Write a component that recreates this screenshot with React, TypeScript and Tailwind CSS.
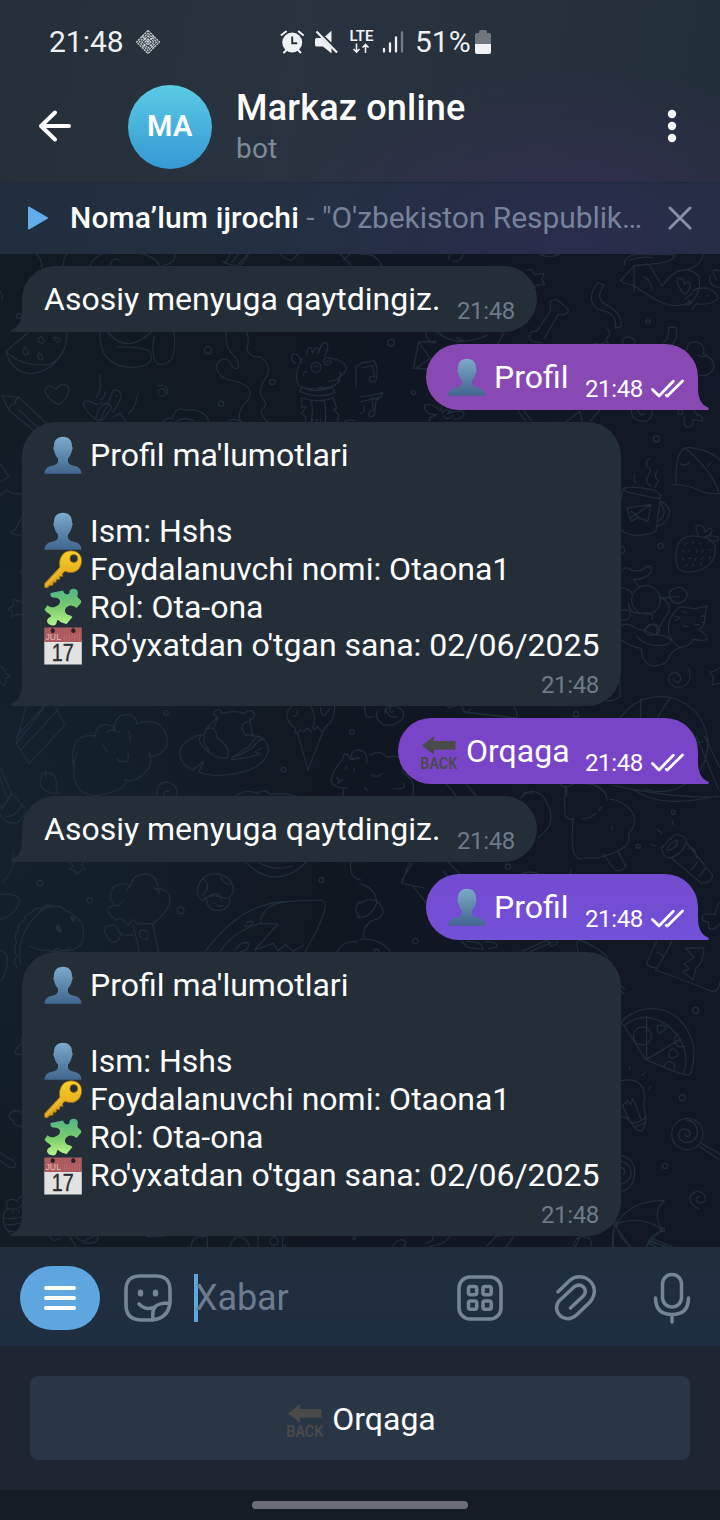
import React from 'react';

type TextLine = { icon?: 'person' | 'key' | 'puzzle' | 'calendar' | 'back'; text: string };

function Person() {
  return (
    <svg className="h-[38px] w-[38px] shrink-0" viewBox="0 0 38 38">
      <defs>
        <linearGradient id="person" x1="0" y1="0" x2="0" y2="1">
          <stop offset="0" stopColor="#7ea9c9" />
          <stop offset="1" stopColor="#41658f" />
        </linearGradient>
      </defs>
      <path
        fill="url(#person)"
        d="M19 .7C25 .7 28.300 4.500 28 10.500 29 11 28.800 13 27.800 15 27 18.500 26 20.500 24 22.500V25.500C24.500 28.500 27.500 29 31 30 35.500 31 37.300 34 37.500 37.800H.5C.7 34 2.500 31 7 30 10.500 29 13.500 28.500 14 25.500V22.500C12 20.500 11 18.500 10.200 15 9.200 13 9 11 10 10.500 9.700 4.500 13 .7 19 .7z"
      />
    </svg>
  );
}

function KeyIcon() {
  return (
    <svg className="h-[38px] w-[38px] shrink-0" viewBox="0 0 38 38">
      <defs>
        <linearGradient id="key" x1="0" y1="0" x2="0" y2="1">
          <stop offset="0" stopColor="#f9cf2b" />
          <stop offset="1" stopColor="#d99a16" />
        </linearGradient>
      </defs>
      <path
        fill="url(#key)"
        stroke="#9a6a12"
        strokeWidth=".8"
        fillRule="evenodd"
        d="M18 5.500C21 1 27 0 31.500 1.500c4.500 1.800 6.800 6 6 11.200-1 6.300-5.500 10-11 9.800-2.200-.1-4-.4-5.500-1.200l-2.500 2.500.3 2.700-2.800-.2-.5 3.300-3-.2-.5 3-2.600-.3-.6 3.200-3.200.2L3.500 38 .7 37.600.5 33.500l15.300-16.300C15 13 15.700 8.500 18 5.500zM29.800 4.600a3.900 3.900 0 1 0 0 7.800 3.900 3.900 0 0 0 0-7.800z"
      />
      <path d="M1.500 36L17.500 19.500" stroke="#f4da72" strokeWidth="1" opacity=".7" />
    </svg>
  );
}

function Puzzle() {
  return (
    <svg className="h-[38px] w-[38px] shrink-0" viewBox="0 0 38 38">
      <defs>
        <linearGradient id="puzzle" x1="0" y1="0" x2="0" y2="1">
          <stop offset="0" stopColor="#4fb487" />
          <stop offset=".5" stopColor="#7bcb6d" />
          <stop offset="1" stopColor="#b6f58a" />
        </linearGradient>
      </defs>
      <path
        fill="url(#puzzle)"
        d="M6.500 5L19 2.500Q20 6 23 6.500 26 6 25.500 3 27 .3 30.500.8 34.300 1.800 33.800 5.500 32.500 9 35 10.500 37.500 12 37.300 14.500L32.500 20Q30 17 26 17.500 20.500 19 21 23.500 22 27 26.500 27.500L28.500 29 22.500 36Q17 35 14.500 32.300 13 31.500 12.800 34 12 37.500 9 37.500 4 37 3 33.500 3 30 7 28.500 7.500 27 4 25 1.500 23.500.5 21.500L3.500 17.300Q6 20 10.500 19 16.500 17 16 12.500 14.500 9 8.500 9.500 6 8.500 6.500 5z"
      />
    </svg>
  );
}

function CalendarIcon() {
  return (
    <svg className="h-[38px] w-[38px] shrink-0 overflow-visible" viewBox="0 0 38 38">
      <path fill="#e2e2e2" d="M.3 14.500h37.500v24H.3z" />
      <path fill="#ae5a5e" d="M.3 1.500h37.500v14.500H.3z" />
      <path d="M8.500 5V1.500M29.300 5V1.500" stroke="#3a3037" strokeWidth="1.200" />
      <circle cx="8.700" cy="4.800" r="2.200" fill="#2b2229" />
      <circle cx="29.300" cy="4.800" r="2.200" fill="#2b2229" />
      <text x="1.500" y="14" fontFamily="Liberation Sans" fontSize="8.500" fill="#e0c2c3" textLength="15.500" lengthAdjust="spacingAndGlyphs">JUL</text>
      <path d="M20.500 9.500v5M23 8.500v6M25.500 9.500v5M28 8.500v6M30.500 9.500v5M33 8.500v6M35.500 7.500v7" stroke="#bb7a7d" strokeWidth="1" strokeDasharray="1 1" />
      <text x="7.800" y="34.800" fontFamily="Liberation Sans" fontSize="23" fill="#2e2e2e" stroke="#2e2e2e" strokeWidth=".4" textLength="22" lengthAdjust="spacingAndGlyphs">17</text>
    </svg>
  );
}

function BackIcon() {
  return (
    <svg className="h-[38px] w-[38px] shrink-0 overflow-visible" viewBox="0 0 38 38">
      <path fill="#4a4a4a" d="M2 13.500L14 4v5h21.500v8.700H14v5z" />
      <text x=".3" y="36.500" fontFamily="Roboto, Liberation Sans" fontWeight="600" fontSize="16" fill="#4a4a4a" textLength="37" lengthAdjust="spacingAndGlyphs">BACK</text>
    </svg>
  );
}

function LineIcon({ icon }: { icon: NonNullable<TextLine['icon']> }) {
  if (icon === 'person') return <Person />;
  if (icon === 'key') return <KeyIcon />;
  if (icon === 'puzzle') return <Puzzle />;
  if (icon === 'calendar') return <CalendarIcon />;
  return <BackIcon />;
}

function LineRow({ line }: { line: TextLine }) {
  return (
    <div className="flex h-[38px] items-center gap-2 whitespace-pre text-[32px] leading-[38px]">
      {line.icon && <LineIcon icon={line.icon} />}
      <span>{line.text}</span>
    </div>
  );
}

const profileLines: TextLine[] = [
  { icon: 'person', text: "Profil ma'lumotlari" },
  { text: ' ' },
  { icon: 'person', text: 'Ism: Hshs' },
  { icon: 'key', text: 'Foydalanuvchi nomi: Otaona1' },
  { icon: 'puzzle', text: 'Rol: Ota-ona' },
  { icon: 'calendar', text: "Ro'yxatdan o'tgan sana: 02/06/2025" },
];

function LeftTail() {
  return (
    <svg className="absolute bottom-0 -left-[11px] h-[22px] w-[12px]" viewBox="0 0 12 22">
      <path fill="#232e39" d="M12 0H11C11 10 8 16.500 1 19.600Q-.5 20.700 1 22H12z" />
    </svg>
  );
}

function IncomingShort() {
  return (
    <div className="relative ml-[22px] flex h-[66px] w-[515px] justify-between rounded-[33px] rounded-bl-none bg-[#232e39] px-[22px] pt-[14px] pb-[7px]">
      <LeftTail />
      <LineRow line={{ text: 'Asosiy menyuga qaytdingiz.' }} />
      <span className="self-end text-[24px] leading-[28px] tracking-[-.35px] text-[#6d7b89]">21:48</span>
    </div>
  );
}

function IncomingProfile() {
  return (
    <div className="relative ml-[22px] flex h-[284px] w-[599px] flex-col rounded-[34px] rounded-bl-none bg-[#232e39] px-[22px] pt-[14px]">
      <LeftTail />
      {profileLines.map((line, i) => (
        <LineRow key={i} line={line} />
      ))}
      <span className="mt-[7px] self-end text-[24px] leading-[28px] tracking-[-.35px] text-[#6d7b89]">21:48</span>
    </div>
  );
}

function Outgoing({ line, className, tail }: { line: TextLine; className: string; tail: string }) {
  return (
    <div className={`relative mr-[22px] flex h-[66px] justify-between self-end rounded-[33px] rounded-br-none pt-[14px] pr-[14px] pb-[7px] pl-[22px] ${className}`}>
      <svg className="absolute -right-[11px] bottom-0 h-[22px] w-[12px]" viewBox="0 0 12 22">
        <path fill={tail} d="M0 0H1C1 10 4 16.500 11 19.600Q12.500 20.700 11 22H0z" />
      </svg>
      <LineRow line={line} />
      <div className="flex items-center gap-2 self-end">
        <span className="text-[24px] leading-[28px] tracking-[-.35px]">21:48</span>
        <svg className="h-[20px] w-[33px]" viewBox="0 0 33 20" fill="none" stroke="#fff" strokeWidth="2.800" strokeLinecap="round" strokeLinejoin="round">
          <path d="M1.500 10.500L8 17L22.300 2.300M15.300 16.300L16.300 17L31.500 2" />
        </svg>
      </div>
    </div>
  );
}

function Wallpaper() {
  return (
    <svg className="absolute inset-0 h-full w-full" viewBox="0 254 720 993" fill="none" stroke="#202d3a" strokeWidth="3.800" strokeLinecap="round" strokeLinejoin="round">
      {/* melon, sloth, snake, llama, pencil */}
      <g transform="translate(0 250) scale(.33333)">
        <path d="M108 12q18 16 17 38M190 46q0-26 12-34M270 46q20-40 70-40M330 46q12-30 30-14M480 46q-28-44-110-36M490 46q40-6 34-34M668 34q20 12 42 12t34-30M690 12l-14 28M715 12l-20 26M745 12l-30 30M840 14q30 22 40 14l14-16M1020 12l32 32M1050 12l-20 20" />
        <path d="M18 304L82 250M200 246q4 70-52 98Q60 350 18 304q14 60 72 67 70-4 100-70M122 259q16 14 6 20-14 0-14-12zM160 262q22 0 22 10-14 10-22-10zM74 290q18 18 8 24-14 2-14-10zM118 308q16 16 8 22-16 0-12-14z" />
        <path d="M300 246q-4 100 90 106 80-2 60-46-10-14-98-16M322 246q60 70 132 0M462 260q-10 70 12 82 60 10 48-96" />
        <circle cx="624" cy="301" r="11" /><circle cx="663" cy="461" r="8" /><circle cx="817" cy="396" r="8" /><circle cx="57" cy="198" r="7" />
        <path d="M678 246q-2 40 14 60 30 30 22 48-14 8-26-20-20-18-38 10-2 36 40 46 80 16 54 60-40 40-20 66M740 246q10 30 0 50 10 30 40 24 36 24 20 60-30 40-12 66 20 16-4 34 0 20 20 36" />
        <path d="M888 340q-14-4-14-22 8-14 22 0l10 20M906 324q-20 40-16 62 0 18 14 26 50 10 90-2 30-12 24-30 22-10 20-30-6-18-48-26M920 316q2-30 14-22l4 16q8-26 20-10M955 310q12-40 24-30 12 10-6 40M1020 366q12 24-34 28M905 410q40 24 92 0l8 18q-50 20-105-4zM905 444q50 16 96 0M905 444v30l14-4-14 20 12 10v16M1000 444l10 30-8 6 14 14-4 20M935 455q4 40-2 60M972 450q8 30 4 64M955 412q6 6 12-4M1068 410v-60q8-10 12-2M942 352q6-8 14-2M978 336q4-6 10-2M910 376q0-10 10-12M938 512v-4M950 514v-6M962 514v-4" />
        <circle cx="948" cy="352" r="15" /><circle cx="982" cy="334" r="11" />
        <path d="M175 464q-36-20-40-40 6-30 34-6 18-26 36-8 6 34-30 54zM298 374q10 40-10 70M316 424q2 14-14 26M300 512q20-50 30-46M250 460q4-16 40 4 10-6 34-4l16-40q18-2 24 16-2 16-26 50M250 460q10 30 38 48 14 14 32-14 24-26 6-32-28-4-38 42M350 440v-4M414 430q-10 50-28 60M340 500l22-10 16 26M6 436l50 6 90 84M6 436l20 44 78 64M56 442q-14 10-10 20-16-2-20 18M56 480l70 64M488 516q10-16 30-10 4-38 40-26 60-4 68 36M530 514q20-16 50-2M686 514q14-12 34 0M1034 514q10-6 30-2" />
        <path d="M472 406q36-4 30 24-14 18-28 0 0-16 16-14 8 4 4 12M0 640l26 40-22 14M0 736q20-24 36-6l30 2M66 620v14M0 125q10 8 6 26" />
      </g>
      {/* whale, crab, bone, cup, duck */}
      <g transform="translate(360 250) scale(.33333)">
        <path d="M0 14q48-8 64 32M270 12l-4 16M310 14q-6 20-30 20M540 14q30 12 60-2M502 60l12-2 10 16 28-4-6 18 8 16-24 2-10 8M714 98q-40 50 0 80 60 10 52 56l18-4q4-40-56-72-20-20 4-52zM572 176q-10-30 20-26 24 20 34 30-8 20-30 12l-44 74M572 182l-42 62q-20-2-22 12-4 20 34 22" />
        <path d="M782 92l40-44 44-6 40 66q60-80 110-30 10 40-16 72-40 30-100 6-60-34-78-50-30-4-40-14zM822 48v80M850 80q20 4 26 40M794 44q-6-40 90-30 50-2 60 2-4 22-70 26M810 30q40-14 70-6M968 130q-30-50-8-44 14-2 12 18 20-20 18 8-8 24-22 18zM1000 124q0-10 40-10 30 10 34 30-14 22-62 18M1052 76q-10 30 24 36M976 146l22-16M986 150l-4 16 14-8M1010 160l-14 18M1016 140h4M1040 138l6-2M1070 90q-20-30-4-30l14 2M970 60q50-6 60-46" />
        <circle cx="93" cy="278" r="10" /><circle cx="160" cy="428" r="6" /><circle cx="864" cy="215" r="6" /><circle cx="889" cy="567" r="9" /><circle cx="961" cy="486" r="7" />
        <path d="M176 276l54-2M176 276l-16 78 70 6M176 276l34 50-40 28M196 246q4 30 30 34M230 246q60 50 150 10M288 262l20 8-16 8M430 250l-18 36M0 340l42-8q14 20 6 60-14 8-20-2 0-16 16-10l-6-34-32 8M0 440l34-4 34-8M0 456l60-14M68 428q-6 20-20 22l-4 44q-14 12-18 0 0-14 14-12l-4-40M0 490q18 0 12-22M194 464q16-8 48 18 4-30 30-20 14 16-10 30 50-20 50 2-10 16-30 12M194 464q-2 30 36 30-30 10-20 20M246 490q10-20 30-2M250 496q10 20 30 0M475 484l22 30M490 480l24 32M620 514l40-30 6 30M690 514l30-34" />
        <path d="M742 234q14 20 0 28-8 20 14 24M702 280q20 6 30-2M788 280q-4-20 20-20 24 10 16 24M926 232h22q8 40-18 58M926 232q2 36-16 46M982 294q0-20 28-18 28 8 20 38 30 10 32 36-8 30-44 26M982 294l-12 16 16 10M1014 316q20 10 26-4M814 480q0 34 40 34 24-4 22-34M834 482q10 20 20 8M974 500q-8 30 12 32 14 0 12-22 20-2 30 4 0-20-18-20l-8-14M870 626q-14 6-10 22 20 10 6 26-16 20 6 34M824 674q-6 16 4 24M890 664q-10 20 6 30-6 4-10 18M790 714q46-6 90 6 30 14 20 26-30-4-104-22zM790 714l-8 36" />
        <path d="M938 704q30 0 64 10 40 22 78 16M948 700q-4-110 40-108 70 10 92 40M976 594q80 70 100 130M962 642q14 10 26-6M1042 650l10-12" />
      </g>
      {/* bell, star, sail */}
      <g transform="translate(0 500) scale(.33333)">
        <path d="M66 52q-14 20-20 36-10 8-14 10 16 10 34 8M66 306l-26-8v20l-16 8 12 8v16l20-8 10 4M0 500q14 0 16 20l16 6-14 8q2 14-6 22l-12-12M66 210q-8 6 0 14" />
      </g>
      {/* strawberry, cat, balloon */}
      <g transform="translate(360 500) scale(.33333)">
        <path d="M800 24l72-10-8 50-30-12-20 12zM872 14l-58 38M840 56l-26-22M782 90q40 30 106 4l12-90M900 4q30 10 28 40-10 30-36 34M904 14q20 30-8 48" />
        <path d="M956 130q20-30 60-20 40 0 50 30 4 60-60 74-60 12-58-40 0-30 8-44zM1016 110q-16-40 0-34 16-2 20 20 18-20 20-6 0 16-20 20M1040 108q40-4 34 14l-30 2" />
        <path d="M980 130l-6 4M1000 124l-2 6M1018 128l4 6M968 150l4 6M988 150l-4 6M1008 150l4 4M1030 150l-4 6M966 176l6 4M986 174l6 2M1008 174l-4 8M1030 172l-6 6M976 198l6-4M998 198l2-6M1020 196l4-6M1048 176l4-6M1048 152l4-4" />
        <circle cx="902" cy="138" r="8" /><circle cx="784" cy="150" r="10" /><circle cx="858" cy="300" r="43" /><circle cx="648" cy="643" r="8" />
        <path d="M788 210q10-14 30 2 30 4 40-12 20-6 16 16-20 24-54 22l18 26M782 262q30 6 34 20M928 276q30-30 54 4-2 30-34 30-22-8-20-34zM898 296q60-8 60-6M900 290q30 16 28 42-20 30-34 60M806 310q0 30 30 30 50-8 40 18M784 330q26-4 28 14-6 20-30 16M784 378q20-14 40 6 40 10 60 20 40 0 50 20M784 420q30 20 60 26 2 50 40 52 40-4 44-30 14-20 30-24M856 390q20-30 40-10 10 20-20 26-40-8-10-32 30-6 24 26M830 410q40 40 100 20" />
        <path d="M960 320q20 4 46 6l34-8q-4 20-6 40M960 320q-40 30-34 80 10 30 34 42 30-2 40-24 30 6 42 0-4-20-26-28 20-10 18-40M944 348l16 4-14 10M968 334l12 4M970 378l14 2M1004 374h14M1024 350l12-4M1024 366l10 4" />
        <path d="M948 518q-26 0-22 26 24 30 52 10 20-20 8-50M948 518q20 10 12 26-14 8-20-8M1078 502l-10 10-18 4 10 16-2 22 20-4M780 540v50q-20 14-40 12M780 654q60-80 160-60 90 30 104 130 0 80-60 124-60 40-130 20M842 596v60M932 592l-40 60M1010 710l66 160M1034 710l44 90M1030 726l-14 2M760 856q180 40 320 34M820 868q80 60 250 20" />
        <path d="M14 620q0 40 24 30M74 640q0-26 28-22 34 8 28 34-20 30-60 22-30-20-18-40M78 630q10 28 34 20M90 622q-4 20 10 12M262 620q10 6 24-2M306 620q10 30 26 6M310 636l160 18q4-20-10-34" />
        <path d="M-20 780q-16-20 10-30 36 0 30 40M30 766q30-20 50 6 40-10 50 16-4 20 0 30 40 24 28 68M66 820q-14 16-30 4M130 850q14 20-30 16M14 862l8 10M250 840l40 50M320 854l30 36M490 888q-4-16 30-8M600 854q20 14 40-2 10-10 20 0M620 860v30M660 850q70 0 80 40" />
      </g>
      {/* popcorn, cloud, teddy, ice cream */}
      <g transform="translate(0 700) scale(.33333)">
        <path d="M78 20L48 130l40 60 106-114-30-60M50 130L134 20M62 150L172 32M50 110l80-90M0 200l34 80-30 50M0 232l20 60M34 278l44 50q-10 40-40 42-20 0-38-26M34 284q-16 30-34 38M20 350q30 0 48-40M136 208v24M124 230q-10 24 10 40 14 12 42 10-12-20-6-36-8-30-32-26-14 2-14 12" />
        <path d="M284 112q6-40 32-38 24-2 28 20-4-44 30-50 36 0 36 28 80-28 92 52-2 36-46 46-14-2-8-12 16 36-20 66-30 26-54 16 14-10-4 20-30 20-80 26-76 0-68-90-12-26 4-64 10-30 60-24zM320 98q10-14 38-2M306 132l16 24M386 92l6 32M350 176q10 14 28 8 10-6 6-24M230 158q-10 20-6 36" />
        <path d="M640 86l14-34q-16-6-12-16 20-16 24 4 36-10 68 0 20-20 30 4-4 16-14 14l8 50M652 52l-30 30q-14 30-8 50l14 20M616 90q30-20 36 26 40 20 30 58-34 4-60-22-34-30-20-44M750 66q-20-2-26 16l12 24 20-2M756 108q40-6 50 40-10 70-150 78-30 2-60-10l16-32-34 26q-50-24-34-70 30-34 66-36M698 170q50-10 80-50 14-14-8-10l-24 30-46 30q-10 10 0 8 50-4 80-16l-16-6 20-12M780 120h8" />
        <path d="M888 88q-50-40-10-72M930 16q20 30 10 62M888 88l-4 10q10 2 16-8l14 4 8-10 12 12M936 80l8 10 8-10 14 14 10-10M976 82q30-18 28-66M962 24q-2 20 12 22l16-20M892 98l32 112 48-124M880 50q14 0 12-18M1028 178q0-20 16-14l8 14q26-4 28-4M1028 178q-36 40-34 68 10 20 46 18M1010 234l8 6-4 10 14-10M1040 200l-4 10M1062 206v8M1030 264v30" />
        <circle cx="498" cy="38" r="7" /><circle cx="1056" cy="97" r="7" /><circle cx="850" cy="209" r="7" /><circle cx="120" cy="550" r="8" /><circle cx="269" cy="601" r="8" /><circle cx="542" cy="631" r="10" /><circle cx="964" cy="540" r="7" />
        <path d="M470 286q-2-40 32-40 34 8 28 40M492 286q-2-16 14-12M710 286q30-20 60-6 30-16 40 4 30-8 76 4M736 486q90 90 184 0M776 486q44 30 100 12M1052 486q-4 50 30 54" />
        <path d="M210 486l10 14-12 8 16 4 8 12 10-12 14-6-10-10 4-10M6 546q30-24 34-60v-34M40 484h20v-20M0 584q40-6 60 14-10 46-60 60M0 750q26 8 22 40-4 30-18 52M54 804q-20-20-4-34-10-30 0-44-10-20 4-32-2-24 20-34 0-20 20-22 14-20 30-10 20-20 40-8 20-6 26 8 40 16 56 44 18 70-36 80-80 8-120-14M62 792q-16-90 60-160 30-20 70-8M146 750q10 10 26-6 20 16 40-2" />
        <ellipse cx="176" cy="685" rx="6" ry="11" fill="#202d3a" transform="rotate(-25 176 685)" /><ellipse cx="218" cy="656" rx="4" ry="8" fill="#202d3a" transform="rotate(-25 218 656)" />
        <path d="M342 614q-20-20-4-50 20-20 56-8 0-30 40-34 40 4 40 44 44 4 34 50-20 34-48 54l-46 2-14-14-16 18-18-20-20 4q-10-10-20-20-10-26 32-24M380 570q10-14 14-14M462 564q10 0 16 16M356 616l14-14M400 676l18 80M458 674l18 82M430 690q20 0 12 28-20 0-24-14 0-14 12-14zM400 704q-26 6-42-6-6-30-36-20-20 14 0 30 2 20 24 18 20-10 14-30" />
        <path d="M592 570q10-50 56-48 50 4 52 50-6 20-20 24-50-20-74 6-14-10-14-32zM608 536q30 20 0 50M664 526q-4 26 36 28M616 600q12-22 40-18l8 14M620 600q0 30 34 32 34-2 36-34M640 610h4M666 606v-4M652 614q6 10 16 2M616 754q110-150 250-150l90-4q20-2 20 20-10 50-60 134M660 754q40-60 120-84 10-60 80-64M780 670l54 2-70 78 56-20 14 22 22-18 24 20 30-18M742 666q20-6 18 4-20 14-26 8zM706 750q20-30 40-20 0 24-24 24M1012 754q20-34 60-28M1080 606q-24 20 0 48" />
      </g>
      {/* tree, torch, shorts */}
      <g transform="translate(360 780) scale(.33333)">
        <path d="M480 56q30-40 70-6 40 60 10 100l-26 24M616 18q-4 80 0 90 10 14 24 8M666 116q30 0 40-16M640 114q-10 100 8 116 14 12 30 4l34 0q50-10 80-32 20-14 14-40 40-50-10-86-30-20-44-18M742 60q-2-28-40-46M716 92l10-12M756 136q2 10-2 14M730 222l34 48q20 6 34-10l-24-46M904 204l40-40q20-2 36 14-4 40-50 56-20 0-26-30zM920 210q6-20 30-30 8 20-26 32M934 234l90 76q30 0 34-24l-80-100M986 204q20-4 24 30M994 270l20-26M1016 290l22-26M942 140l-6-20M906 160l-14-12M888 198l-14-4" />
        <circle cx="940" cy="97" r="6" /><circle cx="835" cy="199" r="6" /><circle cx="444" cy="260" r="8" /><circle cx="166" cy="483" r="8" /><circle cx="50" cy="514" r="7" /><circle cx="1007" cy="691" r="9" />
        <path d="M146 250l-20 60 66 14M126 300l30-50M160 320l40 50M250 274l10 12M264 246l40 40M480 284q30-16 60 0M630 284l4-14M0 310q50 16 50 60-20 50-60 40M0 370q30-20 54-4 30 30 0 50-44 10-44 56M0 478q60-4 90 36M320 484q46-2 50 24l-46-6-20-18M376 484q40 0 34 18l-24 4M486 514l72-32M512 514l66-28M560 482q10 0 10 16 24-2 22-14M654 516q-10-40 10-34 50 20 80 50M1080 370q-8-2-14 34-34-8-40 8 0 14 20 14-6 30 20 18l14-14" />
        <path d="M890 484q-20 40-30 66 8 14 26 12M936 484q-30 60-50 86 60 20 170 64 20 4 24-30M890 516l20 10M976 504l56 0q-4 50-24 60-6 30-10 36-20-20-30-24l20-10-16-14 30-20z" />
      </g>
      {/* pizza, bulb, lollipop, umbrella */}
      <g transform="translate(600 960) scale(.33333)">
        <path d="M64 78l10 10M64 92l8 10M64 186q40-44 100-40 80 8 110 90 16 40 0 100-4 14-26 6-14-2-112-44L72 196l-8-6M76 194q70-50 140 14 60 60 34 132M140 170v128l104-62M172 196q14-4 26 6-4 14-10 10l-8 8-8-8zM208 276q10-20 20-2 14 14-2 16-14 10-20-2zM190 322q10-26 34-10l-2 18M234 220q-20 20 0 40l20 0M88 320l2 8M134 338l-8 8M152 380l-6 6M64 362q66-14 70 50-6 30 4 60M64 470q20 0 30 18M92 488L68 438q8-16 10-4l4-14 10 14 6-18 8 16 16 44M94 488q20 4 44-16-2 30-14 42-20-4-30-26zM106 500l30-12" />
        <circle cx="127" cy="228" r="27" /><circle cx="287" cy="151" r="9" /><circle cx="247" cy="413" r="9" /><circle cx="195" cy="618" r="8" /><circle cx="262" cy="522" r="47" /><circle cx="188" cy="809" r="6" /><circle cx="47" cy="792" r="6" />
        <path d="M260 480q34 4 32 42-6 26-34 26-24-6-22-28 10-20 28-10 10 10 2 20-10 0-8-8M304 550l56 32M300 560l60 40M64 588q40 6 40 50-4 50-40 56M64 604q28 8 30 34-4 26-30 34M64 622q20 10 6 22M298 746q-30-8-28-36 10-20 32-14 20 10 12 28-14 12-26-4 0-10 10-10M47 792q50-74 146-70-40 36-6 88-60-46-140-18zM47 792q-10 30-10 70M47 792q10 40 44 68M150 840l50 24M144 850l34 14M140 860q10-20 46-50" />
      </g>
      <g transform="translate(0 1230) scale(.33333)">
        <path d="M20 0l20 20M150 20q10 20 30 4M208 20l20 30M230 20q10 20 30 10 30-20 34-8-2 24-44 16M440 20l50-2M574 50q0-30 30-30h18v30M690 50q10-30 28-30 24 4 30 30M774 18v32M848 18v30h10M1060 20v10l10-10" /><circle cx="822" cy="33" r="12" />
      </g>
      <g transform="translate(360 1230) scale(.33333)">
        <path d="M98 48q20-30 40-12l-6 14M196 40l20-8 4-16M208 50q50-8 60-30M380 48q20-20 30-30l24-2M440 50l20-30M642 50q0-30 30-30 30 6 20 30M660 20l-14 30M760 50V0M775 0l36 50M860 50q10-40 54-50M866 34l54 16M876 26l60 24" />
      </g>
      {/* bone, spoon, acorn */}
      <g transform="translate(0 940) scale(.33333)">
        <path d="M68 290q-6 10 0 20-26 16-22 30 8 6 22 2M66 518q-24-14-38 6-2 16 14 18-4 16 24 16M0 640l36 20q16 12 6 22-10 4-20-4l-22-16M66 770q-10 0-14 14-14-10-28-2-10 10 0 24-20 10-12 46 8 26 30 22M24 806l24 2 18-12M10 834q30 6 56-4M12 852q24 6 50-4M38 812v6M56 810v6" />
      </g>
    </svg>
  );
}

export default function App() {
  return (
    <div className="flex h-[1520px] w-[720px] flex-col overflow-hidden bg-[#161c25] font-[Roboto,'Liberation_Sans',sans-serif] text-white">
      <header className="flex h-[254px] flex-col bg-[radial-gradient(ellipse_300px_180px_at_570px_250px,#352e52,transparent),linear-gradient(100deg,#242f39,#28333f_40%,#232e3b)]">
        <div className="flex h-[84px] items-center pl-[49px] text-[30px] leading-none text-[#eef0f3]">
          <span className="w-[87px]">21:48</span>
          <svg className="h-6 w-6" viewBox="0 0 24 24" fill="none" stroke="#c8ccd1" strokeWidth="1.300">
            <path strokeDasharray="2.300 .7" d="M12 .5L23.500 12 12 23.500.5 12zM12 3.300L20.700 12 12 20.700 3.300 12zM12 6l6 6-6 6-6-6zM12 9l3 3-3 3-3-3zM6 6l12 12M18 6L6 18" />
          </svg>
          <svg className="ml-[120px] h-6 w-6" viewBox="0 0 24 24">
            <circle cx="12.200" cy="12.500" r="10" fill="#eef0f3" />
            <path d="M1.500 5L6 1.500M18.800 1.500L23 5M4 22.500l3-3M20.500 22.500l-3-3" stroke="#eef0f3" strokeWidth="2" strokeLinecap="round" />
            <path d="M12.200 6.500v6.700h5" fill="none" stroke="#28333f" strokeWidth="1.900" />
          </svg>
          <svg className="ml-[10px] h-6 w-6" viewBox="0 0 24 24" fill="#eef0f3">
            <path d="M1 9.500Q1 8 3 8h4.500L17.500 18v5.500L9 16.500H3Q1 16.500 1 15zM11 6.500L17.500.8v11.700z" />
            <path d="M2.500 1.500L23 22.500" stroke="#eef0f3" strokeWidth="2.200" />
          </svg>
          <svg className="ml-[11px] h-[26px] w-[26px] overflow-visible" viewBox="0 0 26 26">
            <text x=".5" y="12.300" fontFamily="Roboto" fontWeight="600" fontSize="15" fill="#eef0f3" textLength="24" lengthAdjust="spacingAndGlyphs">LTE</text>
            <path d="M7.500 14.500v8.500M4.500 20l3 3 3-3M16.500 24v-8.500M13.500 18.500l3-3 3 3" fill="none" stroke="#eef0f3" strokeWidth="1.600" />
          </svg>
          <svg className="ml-[7px] h-6 w-6" viewBox="0 0 24 24" strokeWidth="2.300" stroke="#eef0f3" strokeLinecap="round">
            <path d="M2 19v2.500M8 13.500v8M14 7.500v14" />
            <path d="M20 2.500v19" stroke="#747c86" />
          </svg>
          <span className="ml-[9px] w-[60px]">51%</span>
          <svg className="h-6 w-4" viewBox="0 0 16 24">
            <path d="M4 2q0-2 2-2h4q2 0 2 2v1h2q2 0 2 2v9H0V5q0-2 2-2h2z" fill="#70767f" />
            <path d="M0 14h16v8q0 2-2 2H2q-2 0-2-2z" fill="#f0f1f4" />
          </svg>
        </div>
        <div className="flex h-[98px] pl-[38px]">
          <svg className="mt-[25px] h-[34px] w-[34px]" viewBox="0 0 34 34" fill="none" stroke="#fff" strokeWidth="4" strokeLinecap="round" strokeLinejoin="round">
            <path d="M31 17H3M17 3.500L3 17l14 13.500" />
          </svg>
          <div className="mt-[1px] ml-[56px] flex h-[84px] w-[84px] items-center justify-center rounded-full bg-linear-to-b from-[#5bcbe3] to-[#3598d4] text-[29px] font-semibold tracking-[.4px]">MA</div>
          <div className="ml-6 flex flex-1 flex-col">
            <span className="mt-[3px] text-[36px] leading-[42px] font-medium tracking-[.2px]">Markaz online</span>
            <span className="mt-[3px] text-[28px] leading-[34px] tracking-[.2px] text-[#7d8b99]">bot</span>
          </div>
          <svg className="mt-[24px] mr-[42px] h-9 w-3" viewBox="0 0 12 36" fill="#fff">
            <circle cx="6" cy="6" r="4.200" /><circle cx="6" cy="18" r="4.200" /><circle cx="6" cy="30" r="4.200" />
          </svg>
        </div>
        <div className="flex h-[72px] items-center border-t border-[#1d2937]/60 bg-[#1c2d45]/40 pb-[1px] pl-[27px]">
          <svg className="h-6 w-[22px]" viewBox="0 0 22 24">
            <path d="M2 1.500v21L20 12z" fill="#62aeea" stroke="#62aeea" strokeWidth="2" strokeLinejoin="round" />
          </svg>
          <div className="ml-[21px] w-[574px] text-[30px] leading-[36px] whitespace-nowrap text-[#76829a]">
            <span className="font-medium tracking-[.12px] text-white">Noma’lum ijrochi</span>
            <span className="tracking-[-.07px]"> - "O'zbekiston Respublik…</span>
          </div>
          <svg className="ml-[24px] h-6 w-6" viewBox="0 0 24 24" stroke="#8791a5" strokeWidth="3" strokeLinecap="round">
            <path d="M2 2l20 20M22 2L2 22" />
          </svg>
        </div>
      </header>

      <main className="relative h-[993px] bg-[radial-gradient(ellipse_320px_520px_at_0px_540px,#14222e,transparent),linear-gradient(90deg,#101a22,#111722_55%,#111824)]">
        <Wallpaper />
        <div className="relative flex flex-col gap-3 pt-3">
          <IncomingShort />
          <Outgoing line={{ icon: 'person', text: 'Profil' }} className="w-[272px] bg-[#8849b5]" tail="#8849b5" />
          <IncomingProfile />
          <Outgoing line={{ icon: 'back', text: 'Orqaga' }} className="w-[300px] bg-[#7945c8]" tail="#7945c8" />
          <IncomingShort />
          <Outgoing line={{ icon: 'person', text: 'Profil' }} className="w-[272px] bg-linear-to-b from-[#744bd0] to-[#7250d8]" tail="#7250d8" />
          <IncomingProfile />
        </div>
      </main>

      <section className="flex h-[99px] items-center bg-linear-to-b from-[#202e3b] to-[#1f2d41] pt-[3px] pl-5">
        <div className="flex h-16 w-20 flex-col items-center justify-center gap-[6px] rounded-[32px] bg-[#5ea6df]">
          <div className="h-1 w-8 rounded-full bg-white" />
          <div className="h-1 w-8 rounded-full bg-white" />
          <div className="h-1 w-8 rounded-full bg-white" />
        </div>
        <svg className="ml-6 h-12 w-12" viewBox="0 0 48 48" fill="none" stroke="#758595" strokeWidth="3.600" strokeLinecap="round" strokeLinejoin="round">
          <path d="M46 29V16Q46 2 32 2H16Q2 2 2 16v15q0 14 14 15h13q15-2 17-17zM15 30q7 7 16 3M29 45q-1-8 2-12t14-4" />
          <ellipse cx="16.500" cy="19" rx="2.800" ry="3.500" fill="#758595" stroke="none" />
          <ellipse cx="31.500" cy="19" rx="2.800" ry="3.500" fill="#758595" stroke="none" />
        </svg>
        <div className="ml-[22px] h-12 w-1 bg-[#5ea6df]" />
        <span className="-ml-[3px] w-[259px] text-[36px] leading-[48px] tracking-[-.1px] text-[#6c7c8e]">Xabar</span>
        <svg className="ml-[2px] h-12 w-12" viewBox="0 0 48 48" fill="none" stroke="#758595" strokeWidth="3.600">
          <rect x="3" y="3" width="42" height="42" rx="11" />
          <rect x="12.500" y="12.500" width="8.200" height="8.200" rx="2" /><rect x="27" y="12.500" width="8.200" height="8.200" rx="2" />
          <rect x="12.500" y="27" width="8.200" height="8.200" rx="2" /><rect x="27" y="27" width="8.200" height="8.200" rx="2" />
        </svg>
        <svg className="ml-[47px] h-12 w-12" viewBox="0 0 48 48" fill="none" stroke="#758595" strokeWidth="3.500" strokeLinecap="round" strokeLinejoin="round">
          <path d="M7 17.800L19 6.200Q25 1 33.500 3.500Q42 7 43.300 15.500Q43.800 22.500 39 28L25.500 41Q18 47.500 10 42.500Q2.500 35.500 7.500 27.500L23.500 12.500Q28.500 9.500 32.500 13Q36 17 32.800 21.500L19.500 34" />
        </svg>
        <svg className="ml-[49px] h-[52px] w-12" viewBox="0 0 48 52" fill="none" stroke="#758595" strokeWidth="3.500" strokeLinecap="round">
          <rect x="14.500" y="2.500" width="19" height="32.500" rx="9.500" />
          <path d="M7.500 26q0 16.500 16.500 16.500T40.500 26M24 43v7" />
        </svg>
      </section>

      <section className="h-[144px] bg-[#1e2731] px-[30px] pt-[30px]">
        <button className="flex h-[84px] w-full items-center justify-center rounded-lg bg-[#293645] pt-[1px] pl-[2px]">
          <LineRow line={{ icon: 'back', text: 'Orqaga' }} />
        </button>
      </section>
      <footer className="flex h-[30px] items-center justify-center bg-[#161c25]">
        <div className="h-2 w-[216px] rounded-full bg-[#6b6e77]" />
      </footer>
    </div>
  );
}
